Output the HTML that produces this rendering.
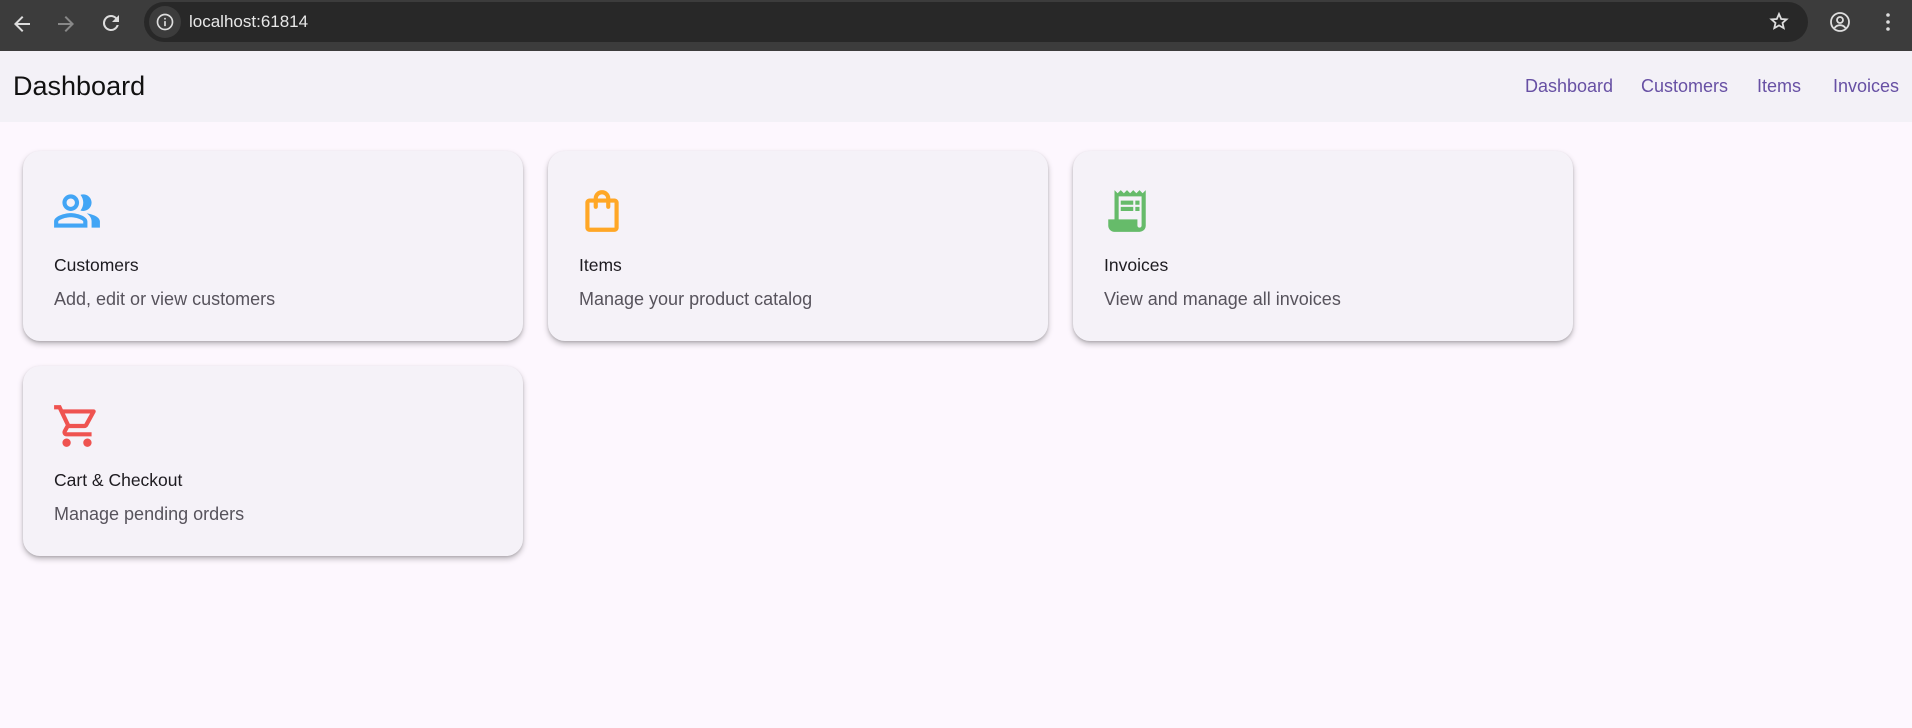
<!DOCTYPE html>
<html><head><meta charset="utf-8"><style>
*{margin:0;padding:0;box-sizing:border-box}
body{width:1912px;height:728px;overflow:hidden;background:#fdf7fe;font-family:"Liberation Sans",sans-serif;position:relative}
.chrome{position:absolute;left:0;top:0;width:1912px;height:51px;background:#3c3c3c}
.pill{position:absolute;left:144px;top:2px;width:1664px;height:40px;border-radius:20px;background:#282828}
.url{position:absolute;left:189px;top:12px;color:#e8e8e8;font-size:17px}
.appbar{position:absolute;left:0;top:51px;width:1912px;height:71px;background:#f3f1f7}
.title{position:absolute;left:13px;top:20px;font-size:27px;color:#111}
.nav{position:absolute;top:25px;font-size:18px;color:#6750a4}
.card{position:absolute;width:500px;height:190px;border-radius:17px;background:#f5f2f8;box-shadow:0 3px 6px rgba(0,0,0,.25),0 1px 2px rgba(0,0,0,.12)}
.card svg{position:absolute;left:29px;top:35px;width:50px;height:50px}
.ct{position:absolute;left:31px;top:104px;font-size:17.5px;color:#1d1b20}
.cd{position:absolute;left:31px;top:138px;font-size:18px;color:#57535c}
</style></head><body>
<div class="chrome">
<svg style="position:absolute;left:10px;top:12px" width="24" height="24" viewBox="0 0 24 24"><path d="M20 11H7.83l5.59-5.59L12 4l-8 8 8 8 1.41-1.41L7.83 13H20v-2z" fill="#ddd"/></svg>
<svg style="position:absolute;left:54px;top:12px" width="24" height="24" viewBox="0 0 24 24"><path d="M12 4l-1.41 1.41L16.17 11H4v2h12.17l-5.58 5.59L12 20l8-8z" fill="#888"/></svg>
<svg style="position:absolute;left:99px;top:11px" width="24" height="24" viewBox="0 0 24 24"><path d="M17.65 6.35A7.960 7.96 0 0 0 12 4a8 8 0 1 0 7.73 10h-2.08A6 6 0 1 1 12 6c1.66 0 3.14.69 4.22 1.78L13 11h7V4l-2.35 2.35z" fill="#ddd"/></svg>
<div class="pill">
<div style="position:absolute;left:5px;top:4px;width:32px;height:32px;border-radius:16px;background:#3c3c3c"></div>
<svg style="position:absolute;left:11px;top:10px" width="20" height="20" viewBox="0 0 24 24"><circle cx="12" cy="12" r="9" fill="none" stroke="#ddd" stroke-width="2"/><path d="M11 11h2v6h-2zM11 7h2v2h-2z" fill="#ddd"/></svg>
</div>
<div class="url">localhost:61814</div>
<svg style="position:absolute;left:1767px;top:10px" width="24" height="24" viewBox="0 0 24 24"><path d="M12 4l2.2 5 5.3.4-4 3.5 1.2 5.2L12 15.4 7.3 18.1l1.2-5.2-4-3.5 5.3-.4z" fill="none" stroke="#ddd" stroke-width="1.8"/></svg>
<svg style="position:absolute;left:1828px;top:10px" width="24" height="24" viewBox="0 0 24 24"><circle cx="12" cy="12" r="9" fill="none" stroke="#ddd" stroke-width="1.8"/><circle cx="12" cy="10" r="3" fill="none" stroke="#ddd" stroke-width="1.8"/><path d="M6.5 18c1.5-2 3.3-2.8 5.5-2.8s4 .8 5.5 2.8" fill="none" stroke="#ddd" stroke-width="1.8"/></svg>
<svg style="position:absolute;left:1876px;top:10px" width="24" height="24" viewBox="0 0 24 24"><circle cx="12" cy="5" r="1.8" fill="#ddd"/><circle cx="12" cy="12" r="1.8" fill="#ddd"/><circle cx="12" cy="19" r="1.8" fill="#ddd"/></svg>
</div>
<div class="appbar">
<div class="title">Dashboard</div>
<div class="nav" style="left:1525px">Dashboard</div>
<div class="nav" style="left:1641px">Customers</div>
<div class="nav" style="left:1757px">Items</div>
<div class="nav" style="left:1833px">Invoices</div>
</div>

<div class="card" style="left:23px;top:151px">
<svg viewBox="0 0 24 24"><path fill="#42a5f5" d="M16.67 13.13C18.04 14.06 19 15.32 19 17v3h4v-3c0-2.18-3.57-3.47-6.33-3.870zM15 12c2.21 0 4-1.79 4-4s-1.79-4-4-4c-.47 0-.91.1-1.33.24C14.5 5.27 15 6.58 15 8s-.5 2.73-1.33 3.76c.42.14.86.24 1.33.24zm-6 0c2.21 0 4-1.79 4-4S11.21 4 9 4 5 5.79 5 8s1.79 4 4 4zm0-6c1.1 0 2 .9 2 2s-.9 2-2 2-2-.9-2-2 .9-2 2-2zm0 7c-2.67 0-8 1.34-8 4v3h16v-3c0-2.66-5.33-4-8-4zm6 5H3v-.99C3.2 16.29 6.3 15 9 15s5.8 1.29 6 2v1z"/></svg>
<div class="ct">Customers</div><div class="cd">Add, edit or view customers</div>
</div>
<div class="card" style="left:548px;top:151px">
<svg viewBox="0 0 24 24"><path fill="#ffa726" d="M18 6h-2c0-2.21-1.79-4-4-4S8 3.79 8 6H6c-1.1 0-2 .9-2 2v12c0 1.1.9 2 2 2h12c1.1 0 2-.9 2-2V8c0-1.1-.9-2-2-2zm-6-2c1.1 0 2 .9 2 2h-4c0-1.1.9-2 2-2zm6 16H6V8h2v2c0 .55.45 1 1 1s1-.45 1-1V8h4v2c0 .55.45 1 1 1s1-.45 1-1V8h2v12z"/></svg>
<div class="ct">Items</div><div class="cd">Manage your product catalog</div>
</div>
<div class="card" style="left:1073px;top:151px">
<svg viewBox="0 0 24 24"><path fill="#66bb6a" d="M19.5 3.5L18 2l-1.5 1.5L15 2l-1.5 1.5L12 2l-1.5 1.5L9 2 7.5 3.5 6 2v14H3v3c0 1.66 1.34 3 3 3h12c1.66 0 3-1.34 3-3V2l-1.5 1.5zM19 19c0 .55-.45 1-1 1s-1-.45-1-1v-3H8V5h11v14zM9 7h6v2H9zm7 0h2v2h-2zm-7 3h6v2H9zm7 0h2v2h-2z"/></svg>
<div class="ct">Invoices</div><div class="cd">View and manage all invoices</div>
</div>
<div class="card" style="left:23px;top:366px">
<svg viewBox="0 0 24 24"><path fill="#ef5350" d="M15.55 13c.75 0 1.41-.41 1.75-1.03l3.58-6.49c.37-.66-.11-1.48-.87-1.48H5.21l-.94-2H1v2h2l3.6 7.59-1.35 2.44C4.52 15.37 5.48 17 7 17h12v-2H7l1.1-2h7.45zM6.16 6h12.15l-2.76 5H8.53L6.16 6zM7 18c-1.1 0-1.99.9-1.99 2S5.9 22 7 22s2-.9 2-2-.9-2-2-2zm10 0c-1.1 0-1.99.9-1.99 2s.89 2 1.99 2 2-.9 2-2-.9-2-2-2z"/></svg>
<div class="ct">Cart &amp; Checkout</div><div class="cd">Manage pending orders</div>
</div>
</body></html>
